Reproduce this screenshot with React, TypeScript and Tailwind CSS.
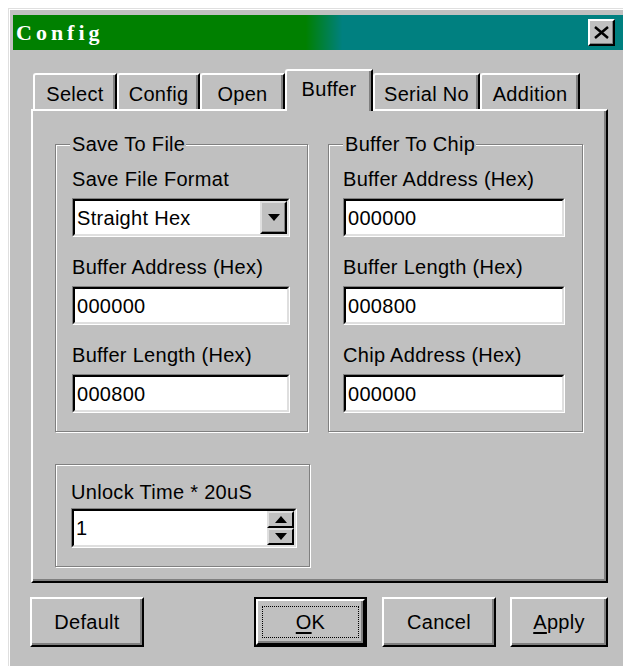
import React from "react";

const tabs = [
  { label: "Select", w: "w-[84px]" },
  { label: "Config", w: "w-[83px]" },
  { label: "Open", w: "w-[85px]" },
  { label: "Buffer", w: "w-[88px]", active: true },
  { label: "Serial No", w: "w-[107px]" },
  { label: "Addition", w: "w-[100px]" },
];

// sunken white edit box
function Field({ value, className = "", children }: { value: string; className?: string; children?: React.ReactNode }) {
  return (
    <div className={`border border-t-[#808080] border-l-[#808080] border-b-white border-r-white ${className}`}>
      <div className="h-full border-2 border-t-black border-l-black border-b-[#dfdfdf] border-r-[#dfdfdf] bg-white flex items-center">
        <span className="flex-1 pl-[2px] leading-none">{value}</span>
        {children}
      </div>
    </div>
  );
}

function Group({ title, className = "", children }: { title?: string; className?: string; children: React.ReactNode }) {
  return (
    <div className={`relative border border-[#808080] shadow-[inset_1px_1px_0_#fff,1px_1px_0_#fff] ${className}`}>
      {title && (
        <span className="absolute -top-[12px] left-[14px] bg-[#c0c0c0] pl-[2px] pr-[1px] leading-[22px]">{title}</span>
      )}
      {children}
    </div>
  );
}

function Btn({ children, className = "", isDefault = false }: { children: React.ReactNode; className?: string; isDefault?: boolean }) {
  const face = (
    <div className="h-full border-2 border-t-white border-l-white border-b-black border-r-black shadow-[inset_-2px_-2px_0_#808080] flex items-center justify-center">
      {isDefault ? (
        <div className="w-[97px] h-[32px] border border-dotted border-black flex items-center justify-center">{children}</div>
      ) : (
        children
      )}
    </div>
  );
  if (isDefault) {
    return <div className={`h-[50px] border-2 border-black ${className}`}>{face}</div>;
  }
  return <div className={`h-[50px] ${className}`}>{face}</div>;
}

function Arrow({ up = false }: { up?: boolean }) {
  return (
    <svg width="12" height="7" viewBox="0 0 12 7">
      <path d={up ? "M6 0 L12 7 L0 7 Z" : "M0 0 L12 0 L6 7 Z"} fill="#000" />
    </svg>
  );
}

export default function App() {
  return (
    <div className="w-[623px] h-[666px] overflow-hidden bg-white pt-[8px] pl-[8px] font-['Liberation_Sans',Arial,sans-serif] text-[20px] tracking-[0.3px] text-black">
      <div className="w-[640px] h-[680px] bg-[#c0c0c0] border-t border-l border-[#dfdfdf] shadow-[inset_1px_1px_0_#fff]">
        {/* caption */}
        <div className="ml-[4px] mt-[6px] w-[610px] h-[35px] flex items-center bg-[linear-gradient(90deg,#008000_0%,#008000_48%,#008080_54%,#008080_100%)]">
          <span className="pl-[3px] flex-1 font-['Liberation_Serif',serif] font-bold text-[22px] tracking-[4px] text-white">Config</span>
          <div className="mr-[8px] w-[27px] h-[27px] border-2 border-t-white border-l-white border-b-black border-r-black shadow-[inset_-1px_-1px_0_#808080] bg-[#c0c0c0] flex items-center justify-center">
            <svg width="15" height="13" viewBox="0 0 15 13">
              <path d="M1 1 L14 12 M14 1 L1 12" stroke="#000" strokeWidth="2.5" />
            </svg>
          </div>
        </div>

        {/* tabs */}
        <div className="relative z-10 ml-[24px] mt-[19px] h-[40px] flex items-end">
          {tabs.map((t) =>
            t.active ? (
              <div
                key={t.label}
                className={`${t.w} h-[42px] -mb-[2px] bg-[#c0c0c0] border-l-2 border-t-2 border-white rounded-tl-[3px] shadow-[inset_-2px_0_0_#808080] border-r-2 border-r-black flex justify-center pt-[3px]`}
              >
                {t.label}
              </div>
            ) : (
              <div
                key={t.label}
                className={`${t.w} h-[36px] border-l-2 border-t-2 border-white rounded-tl-[3px] border-r-2 border-r-black shadow-[inset_-2px_0_0_#808080] flex justify-center pt-[4px]`}
              >
                {t.label}
              </div>
            )
          )}
        </div>

        {/* tab page */}
        <div className="ml-[22px] w-[577px] h-[474px] border-2 border-t-white border-l-white border-b-black border-r-black shadow-[inset_-2px_-2px_0_#808080] pt-[33px] pl-[22px]">
          <div className="flex gap-[20px]">
            <Group title="Save To File" className="w-[253px] h-[288px]">
              <div className="pt-[23px] pl-[16px] flex flex-col">
                <div className="leading-[22px]">Save File Format</div>
                <Field value="Straight Hex" className="mt-[8px] w-[218px] h-[39px]">
                  <div className="w-[27px] h-full border-2 border-t-[#dfdfdf] border-l-[#dfdfdf] border-b-black border-r-black shadow-[inset_-1px_-1px_0_#808080] bg-[#c0c0c0] flex items-center justify-center">
                    <Arrow />
                  </div>
                </Field>
                <div className="mt-[19px] leading-[22px]">Buffer Address (Hex)</div>
                <Field value="000000" className="mt-[8px] w-[218px] h-[39px]" />
                <div className="mt-[19px] leading-[22px]">Buffer Length (Hex)</div>
                <Field value="000800" className="mt-[8px] w-[218px] h-[39px]" />
              </div>
            </Group>
            <Group title="Buffer To Chip" className="w-[255px] h-[288px]">
              <div className="pt-[23px] pl-[14px] flex flex-col">
                <div className="leading-[22px]">Buffer Address (Hex)</div>
                <Field value="000000" className="mt-[8px] w-[222px] h-[39px]" />
                <div className="mt-[19px] leading-[22px]">Buffer Length (Hex)</div>
                <Field value="000800" className="mt-[8px] w-[222px] h-[39px]" />
                <div className="mt-[19px] leading-[22px]">Chip Address (Hex)</div>
                <Field value="000000" className="mt-[8px] w-[222px] h-[39px]" />
              </div>
            </Group>
          </div>

          <Group className="mt-[32px] w-[255px] h-[103px]">
            <div className="pt-[16px] pl-[15px] flex flex-col">
              <div className="leading-[22px]">Unlock Time * 20uS</div>
              <Field value="1" className="mt-[5px] w-[226px] h-[40px]">
                <div className="w-[27px] h-full flex flex-col">
                  <div className="flex-1 border-2 border-t-[#dfdfdf] border-l-[#dfdfdf] border-b-black border-r-black bg-[#c0c0c0] flex items-center justify-center">
                    <Arrow up />
                  </div>
                  <div className="flex-1 border-2 border-t-[#dfdfdf] border-l-[#dfdfdf] border-b-black border-r-black bg-[#c0c0c0] flex items-center justify-center">
                    <Arrow />
                  </div>
                </div>
              </Field>
            </div>
          </Group>
        </div>

        {/* dialog buttons */}
        <div className="mt-[14px] ml-[21px] flex">
          <Btn className="w-[114px]">Default</Btn>
          <Btn isDefault className="ml-[110px] w-[113px]">
            <span>
              <u className="underline-offset-[3px]">O</u>K
            </span>
          </Btn>
          <Btn className="ml-[15px] w-[114px]">Cancel</Btn>
          <Btn className="ml-[14px] w-[98px]">
            <span>
              <u className="underline-offset-[3px]">A</u>pply
            </span>
          </Btn>
        </div>
      </div>
    </div>
  );
}
